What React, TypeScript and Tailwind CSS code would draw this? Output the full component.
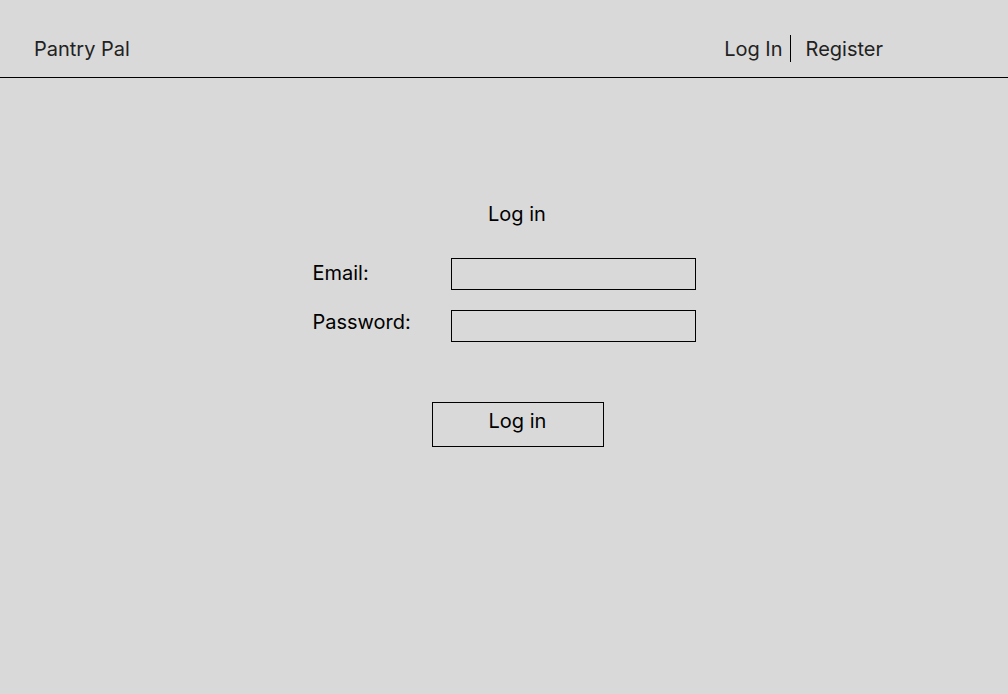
export default function App() {
  return (
    <div className="min-h-[694px] w-full bg-[#d9d9d9] text-black" style={{ fontFamily: "Inter, 'Noto Sans', sans-serif" }}>
      <header className="flex h-[78px] items-start justify-between border-b border-black pl-[34px] pr-[125px] pt-[37px]">
        <div className="text-[20px] leading-[24px] text-[#222]">Pantry Pal</div>
        <nav className="-mt-[2px] flex items-center text-[20px] leading-[24px] text-[#222]">
          <span>Log In</span>
          <span className="ml-[7px] mr-[8px] h-[27px] w-px bg-black" />
          <span className="ml-[7px]">Register</span>
        </nav>
      </header>
      <main className="mx-auto w-[383px] pt-[124px]">
        <h1 className="pl-[26px] text-center text-[20px] leading-[24px]">Log in</h1>
        <div className="mt-[32px] grid grid-cols-[138px_245px] gap-y-[20px]">
          <label className="text-[20px] leading-[24px] pt-[3px]">Email:</label>
          <input className="h-[32px] border border-black bg-transparent" />
          <label className="text-[20px] leading-[24px]">Password:</label>
          <input type="password" className="h-[32px] border border-black bg-transparent" />
        </div>
        <button className="ml-[119px] mt-[60px] flex h-[45px] w-[172px] justify-center border border-black pt-[6px] text-[20px] leading-[24px]">
          Log in
        </button>
      </main>
    </div>
  );
}
